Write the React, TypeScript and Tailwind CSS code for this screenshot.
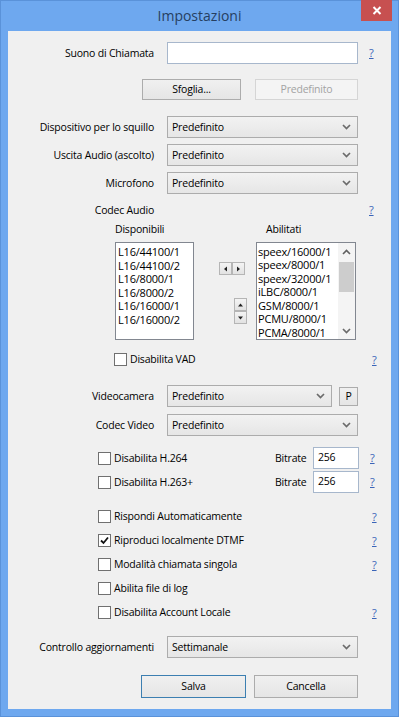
import React from 'react';

const Chevron = () => (
  <svg width="9" height="6" viewBox="0 0 9 6" className="shrink-0">
    <path d="M1 1l3.5 3.5L8 1" fill="none" stroke="#6b6b6b" strokeWidth="1.7" />
  </svg>
);

const Select = ({ value, w = 'w-[191px]' }: { value: string; w?: string }) => (
  <div
    className={`${w} h-[22px] border border-[#acacac] bg-linear-to-b from-[#f2f2f2] to-[#e6e6e6] flex items-center justify-between pl-[4px] pr-[6px]`}
  >
    <span>{value}</span>
    <Chevron />
  </div>
);

const Help = () => <span className="text-[#3a64b8] underline text-[11px]">?</span>;

const Label = ({ children }: { children: React.ReactNode }) => (
  <div className="w-[146px] shrink-0 text-right">{children}</div>
);

const Check = ({ checked = false }: { checked?: boolean }) => (
  <div className="w-[13px] h-[13px] border border-[#707070] bg-white flex items-center justify-center shrink-0">
    {checked && (
      <svg width="9" height="9" viewBox="0 0 9 9">
        <path d="M1 4.5l2.5 2.5L8 1.5" fill="none" stroke="#111" strokeWidth="1.8" />
      </svg>
    )}
  </div>
);

const Button = ({
  children,
  w,
  disabled = false,
  focused = false,
}: {
  children: React.ReactNode;
  w: string;
  disabled?: boolean;
  focused?: boolean;
}) => (
  <div
    className={`${w} h-full flex items-center justify-center border ${
      disabled
        ? 'border-[#d5d5d5] bg-[#f4f4f4] text-[#a3a3a3]'
        : focused
        ? 'border-[#3c7fb1] bg-linear-to-b from-[#f0f0f0] to-[#e5e5e5]'
        : 'border-[#acacac] bg-linear-to-b from-[#f0f0f0] to-[#e5e5e5]'
    }`}
  >
    {children}
  </div>
);

const Tri = ({ dir }: { dir: 'l' | 'r' | 'u' | 'd' }) => {
  const d = {
    l: 'M5 1.5L2 4l3 2.5z',
    r: 'M2 1.5L5 4 2 6.5z',
    u: 'M1 5.5L3.5 2.5 6 5.5z',
    d: 'M1 2.5L3.5 5.5 6 2.5z',
  }[dir];
  return (
    <div className="w-[13px] h-[13px] border border-[#b5b5b5] bg-linear-to-b from-[#f4f4f4] to-[#e2e2e2] flex items-center justify-center">
      <svg width="7" height="8" viewBox="0 0 7 8">
        <path d={d} fill="#222" />
      </svg>
    </div>
  );
};

const CheckRow = ({ label, checked = false, help = true }: { label: string; checked?: boolean; help?: boolean }) => (
  <div className="h-[24px] flex items-center">
    <div className="ml-[90px] flex items-center w-[274px]">
      <Check checked={checked} />
      <span className="ml-[3px]">{label}</span>
    </div>
    {help && <Help />}
  </div>
);

export default function App() {
  const available = ['L16/44100/1', 'L16/44100/2', 'L16/8000/1', 'L16/8000/2', 'L16/16000/1', 'L16/16000/2'];
  const enabled = ['speex/16000/1', 'speex/8000/1', 'speex/32000/1', 'iLBC/8000/1', 'GSM/8000/1', 'PCMU/8000/1', 'PCMA/8000/1'];

  return (
    <div className="w-[399px] h-[717px] bg-[#6ea8ef] border border-[#5a92d9] flex flex-col font-['Open_Sans',sans-serif] text-[10.5px] tracking-[-0.2px] text-black leading-none">
      {/* Title bar */}
      <div className="relative h-[30px] shrink-0 flex items-center justify-center">
        <span className="text-[14px] tracking-normal text-[#263f61] mt-[-1px]">Impostazioni</span>
        <div className="absolute top-[-1px] right-[6px] w-[31px] h-[21px] bg-[#c75050] flex items-center justify-center">
          <svg width="10" height="9" viewBox="0 0 10 9">
            <path d="M1.5 1l7 7M8.5 1l-7 7" stroke="#fff" strokeWidth="2" />
          </svg>
        </div>
      </div>

      {/* Client area */}
      <div className="ml-[7px] w-[383px] h-[678px] bg-[#f0f0f0] flex flex-col">
        <div className="mt-[11px] h-[22px] flex items-center">
          <Label>Suono di Chiamata</Label>
          <div className="ml-[13px] w-[191px] h-full border border-[#a7b7cc] bg-white" />
          <div className="ml-[11px]">
            <Help />
          </div>
        </div>

        <div className="mt-[15px] h-[21px] flex pl-[134px] gap-[14px]">
          <Button w="w-[99px]">Sfoglia...</Button>
          <Button w="w-[103px]" disabled>
            Predefinito
          </Button>
        </div>

        <div className="mt-[16px] h-[22px] flex items-center">
          <Label>Dispositivo per lo squillo</Label>
          <div className="ml-[13px]">
            <Select value="Predefinito" />
          </div>
        </div>
        <div className="mt-[6px] h-[22px] flex items-center">
          <Label>Uscita Audio (ascolto)</Label>
          <div className="ml-[13px]">
            <Select value="Predefinito" />
          </div>
        </div>
        <div className="mt-[6px] h-[22px] flex items-center">
          <Label>Microfono</Label>
          <div className="ml-[13px]">
            <Select value="Predefinito" />
          </div>
        </div>

        <div className="mt-[8px] h-[16px] flex items-center">
          <Label>Codec Audio</Label>
          <div className="ml-[215px]">
            <Help />
          </div>
        </div>

        <div className="mt-[4px] h-[14px] flex items-center">
          <span className="ml-[107px] w-[151px]">Disponibili</span>
          <span>Abilitati</span>
        </div>

        <div className="mt-[6px] h-[98px] flex">
          <div className="ml-[107px] w-[79px] h-full border border-[#828790] bg-white pt-[2px] pl-[2px] text-[11px] leading-[13.5px]">
            {available.map((c) => (
              <div key={c}>{c}</div>
            ))}
          </div>
          <div className="w-[62px] flex flex-col">
            <div className="mt-[20px] ml-[25px] flex">
              <Tri dir="l" />
              <Tri dir="r" />
            </div>
            <div className="mt-[23px] ml-[40px] flex flex-col">
              <Tri dir="u" />
              <Tri dir="d" />
            </div>
          </div>
          <div className="w-[100px] h-full border border-[#828790] bg-white flex overflow-hidden">
            <div className="flex-1 pt-[1.5px] pl-[1px] text-[11px] leading-[13.5px]">
              {enabled.map((c) => (
                <div key={c} className="whitespace-nowrap">
                  {c}
                </div>
              ))}
            </div>
            <div className="w-[17px] h-full bg-[#f4f4f4] flex flex-col items-center">
              <div className="h-[17px] flex items-center justify-center">
                <svg width="9" height="6" viewBox="0 0 9 6">
                  <path d="M1 5l3.5-3.5L8 5" fill="none" stroke="#606060" strokeWidth="1.6" />
                </svg>
              </div>
              <div className="mt-[2px] w-[15px] h-[30px] bg-[#cdcdcd]" />
              <div className="flex-1" />
              <div className="h-[17px] flex items-center justify-center">
                <Chevron />
              </div>
            </div>
          </div>
        </div>

        <div className="mt-[11px] h-[16px] flex items-center">
          <div className="ml-[106px] w-[258px] flex items-center">
            <Check />
            <span className="ml-[3px]">Disabilita VAD</span>
          </div>
          <Help />
        </div>

        <div className="mt-[18px] h-[22px] flex items-center">
          <Label>Videocamera</Label>
          <div className="ml-[13px]">
            <Select value="Predefinito" w="w-[165px]" />
          </div>
          <div className="ml-[7px] w-[19px] h-[19px] border border-[#acacac] bg-linear-to-b from-[#f0f0f0] to-[#e5e5e5] flex items-center justify-center">
            P
          </div>
        </div>
        <div className="mt-[7px] h-[22px] flex items-center">
          <Label>Codec Video</Label>
          <div className="ml-[13px]">
            <Select value="Predefinito" />
          </div>
        </div>

        <div className="mt-[11px] h-[22px] flex items-center">
          <div className="ml-[90px] w-[177px] flex items-center">
            <Check />
            <span className="ml-[3px]">Disabilita H.264</span>
          </div>
          <span className="w-[38px]">Bitrate</span>
          <div className="w-[46px] h-full border border-[#a7b7cc] bg-white pl-[4px] pt-[4px]">256</div>
          <div className="ml-[11px]">
            <Help />
          </div>
        </div>
        <div className="mt-[2px] h-[22px] flex items-center">
          <div className="ml-[90px] w-[177px] flex items-center">
            <Check />
            <span className="ml-[3px]">Disabilita H.263+</span>
          </div>
          <span className="w-[38px]">Bitrate</span>
          <div className="w-[46px] h-full border border-[#a7b7cc] bg-white pl-[4px] pt-[4px]">256</div>
          <div className="ml-[11px]">
            <Help />
          </div>
        </div>

        <div className="mt-[11px]">
          <CheckRow label="Rispondi Automaticamente" />
          <CheckRow label="Riproduci localmente DTMF" checked />
          <CheckRow label="Modalità chiamata singola" />
          <CheckRow label="Abilita file di log" help={false} />
          <CheckRow label="Disabilita Account Locale" />
        </div>

        <div className="mt-[12px] h-[22px] flex items-center">
          <Label>Controllo aggiornamenti</Label>
          <div className="ml-[13px]">
            <Select value="Settimanale" />
          </div>
        </div>

        <div className="mt-[17px] h-[23px] flex pl-[133px] gap-[8px]">
          <Button w="w-[105px]" focused>
            Salva
          </Button>
          <Button w="w-[104px]">Cancella</Button>
        </div>
      </div>
    </div>
  );
}
